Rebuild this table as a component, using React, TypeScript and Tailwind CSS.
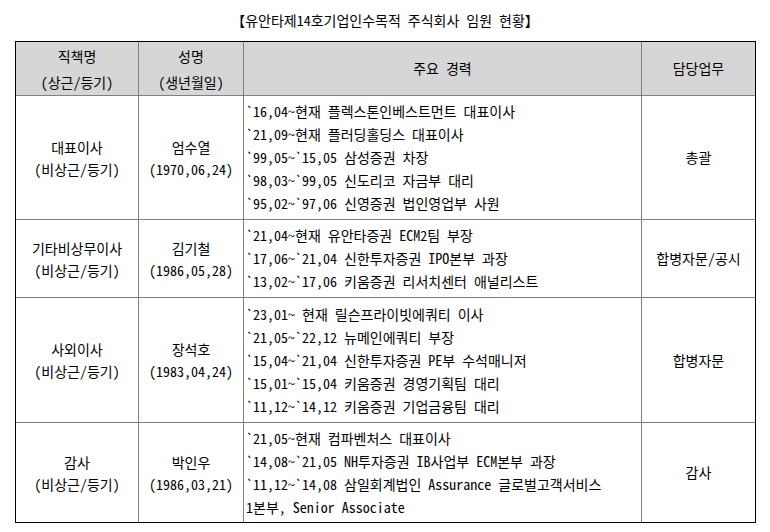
const rows = [
  {
    title: "대표이사",
    name: "엄수열",
    birth: "(1970,06,24)",
    duty: "총괄",
    h: "h-[124px]",
    careers: [
      "`16,04~현재 플렉스톤인베스트먼트 대표이사",
      "`21,09~현재 플러딩홀딩스 대표이사",
      "`99,05~`15,05 삼성증권 차장",
      "`98,03~`99,05 신도리코 자금부 대리",
      "`95,02~`97,06 신영증권 법인영업부 사원",
    ],
  },
  {
    title: "기타비상무이사",
    name: "김기철",
    birth: "(1986,05,28)",
    duty: "합병자문/공시",
    h: "h-[78px]",
    careers: [
      "`21,04~현재 유안타증권 ECM2팀 부장",
      "`17,06~`21,04 신한투자증권 IPO본부 과장",
      "`13,02~`17,06 키움증권 리서치센터 애널리스트",
    ],
  },
  {
    title: "사외이사",
    name: "장석호",
    birth: "(1983,04,24)",
    duty: "합병자문",
    h: "h-[125px]",
    careers: [
      "`23,01~ 현재 릴슨프라이빗에쿼티 이사",
      "`21,05~`22,12 뉴메인에쿼티 부장",
      "`15,04~`21,04 신한투자증권 PE부 수석매니저",
      "`15,01~`15,04 키움증권 경영기획팀 대리",
      "`11,12~`14,12 키움증권 기업금융팀 대리",
    ],
  },
  {
    title: "감사",
    name: "박인우",
    birth: "(1986,03,21)",
    duty: "감사",
    h: "h-[99px]",
    careers: [
      "`21,05~현재 컴파벤처스 대표이사",
      "`14,08~`21,05 NH투자증권 IB사업부 ECM본부 과장",
      "`11,12~`14,08 삼일회계법인 Assurance 글로벌고객서비스",
      "1본부, Senior Associate",
    ],
  },
];

export default function App() {
  return (
    <div className="w-[770px] h-[532px] bg-white text-black text-[14px] font-['Noto_Sans_Mono_CJK_KR','Noto_Sans_CJK_KR',monospace] [font-feature-settings:'hwid']">
      {/* Title */}
      <div className="pt-[9px] h-[41px] text-center leading-[22px]">
        【유안타제14호기업인수목적 주식회사 임원 현황】
      </div>

      {/* Table */}
      <div className="ml-[15px] w-[741px] border border-black">
        <div className="grid grid-cols-[123px_105px_398px_113px]">
          {/* Header */}
          <div className="h-[54px] bg-[#d6d6d6] border-r border-b border-[#808080] flex flex-col items-center justify-center leading-[26px]">
            <span>직책명</span>
            <span>(상근/등기)</span>
          </div>
          <div className="h-[54px] bg-[#d6d6d6] border-r border-b border-[#808080] flex flex-col items-center justify-center leading-[26px]">
            <span>성명</span>
            <span>(생년월일)</span>
          </div>
          <div className="h-[54px] bg-[#d6d6d6] border-r border-b border-[#808080] flex items-center justify-center">
            주요 경력
          </div>
          <div className="h-[54px] bg-[#d6d6d6] border-b border-[#808080] flex items-center justify-center">
            담당업무
          </div>

          {rows.map((r, i) => {
            const last = i === rows.length - 1;
            const bb = last ? "" : "border-b";
            return [
              <div key={`${i}a`} className={`${r.h} ${bb} border-r border-[#808080] flex flex-col items-center justify-center leading-[22px]`}>
                <span>{r.title}</span>
                <span>(비상근/등기)</span>
              </div>,
              <div key={`${i}b`} className={`${r.h} ${bb} border-r border-[#808080] flex flex-col items-center justify-center leading-[22px]`}>
                <span>{r.name}</span>
                <span>{r.birth}</span>
              </div>,
              <div key={`${i}c`} className={`${r.h} ${bb} border-r border-[#808080] flex flex-col justify-center pl-[2px] leading-[23px] whitespace-nowrap`}>
                {r.careers.map((c) => (
                  <span key={c}>{c}</span>
                ))}
              </div>,
              <div key={`${i}d`} className={`${r.h} ${bb} border-[#808080] flex items-center justify-center`}>
                {r.duty}
              </div>,
            ];
          })}
        </div>
      </div>
    </div>
  );
}
